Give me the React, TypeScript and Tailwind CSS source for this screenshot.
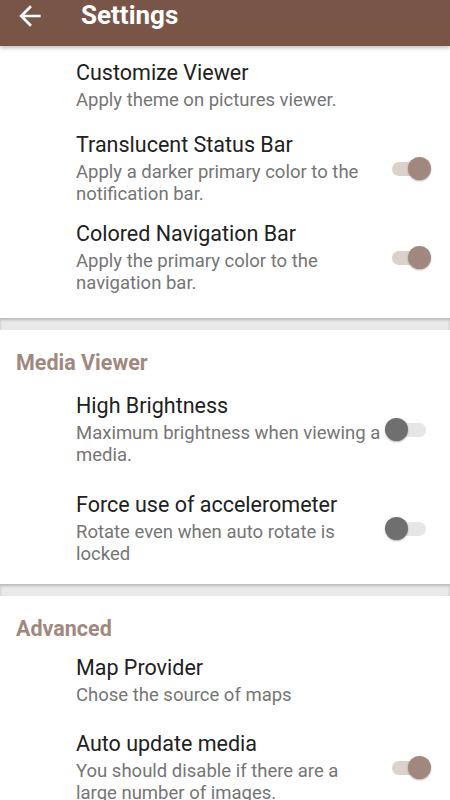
import type { ReactNode } from 'react';

type SwitchProps = { on: boolean };

function Toggle({ on }: SwitchProps) {
  return (
    <div className="relative ml-[3px] h-[23px] w-[46px] shrink-0">
      <div
        className={
          on
            ? 'absolute left-[7px] top-[4.5px] h-[14px] w-[34px] rounded-full bg-[#ddd1cc]'
            : 'absolute left-[7px] top-[4.5px] h-[14px] w-[34px] rounded-full bg-[#e6e6e6]'
        }
      />
      <div
        className={
          on
            ? 'absolute left-[23px] top-0 h-[23px] w-[23px] rounded-full bg-[#a1887f] shadow-[0_1px_2px_rgba(0,0,0,0.3)]'
            : 'absolute left-0 top-0 h-[23px] w-[23px] rounded-full bg-[#6f6f6f] shadow-[0_1px_2px_rgba(0,0,0,0.3)]'
        }
      />
    </div>
  );
}

type PrefProps = {
  title: string;
  summary: string;
  toggle?: boolean;
  className?: string;
};

function Pref({ title, summary, toggle, className }: PrefProps) {
  return (
    <div className={`flex items-center pl-[76px] ${className ?? ''}`}>
      <div className="w-[306px] shrink-0">
        <p className="text-[21.5px] leading-[26px] text-[#212121]">{title}</p>
        <p className="mt-[3px] text-[18.5px] leading-[22px] text-[#757575]">{summary}</p>
      </div>
      {toggle !== undefined && <Toggle on={toggle} />}
    </div>
  );
}

function Category({ children, className }: { children: ReactNode; className?: string }) {
  return (
    <p className={`pl-4 text-[21.5px] font-bold leading-[26px] text-[#a1887f] ${className ?? ''}`}>
      {children}
    </p>
  );
}

function Band() {
  return <div className="h-[12px] bg-[#e9e9e9] shadow-[inset_0_2px_3px_rgba(0,0,0,0.2)]" />;
}

export default function App() {
  return (
    <div className="h-[800px] w-[450px] overflow-hidden bg-white font-['Roboto',sans-serif]">
      <header className="relative z-10 h-[46px] bg-[#795548] shadow-[0_2px_4px_rgba(0,0,0,0.25)]">
        <div className="flex h-[31px] items-center">
          <svg viewBox="0 0 24 24" className="ml-[14px] h-[32px] w-[32px] fill-white">
            <path d="M20 11H7.83l5.59-5.59L12 4l-8 8 8 8 1.41-1.41L7.83 13H20v-2z" />
          </svg>
          <h1 className="ml-[35px] text-[26px] font-bold text-white">Settings</h1>
        </div>
      </header>

      <section>
        <Pref className="pt-[14px]" title="Customize Viewer" summary="Apply theme on pictures viewer." />
        <Pref
          className="pt-[21px]"
          title="Translucent Status Bar"
          summary="Apply a darker primary color to the notification bar."
          toggle
        />
        <Pref
          className="pb-[24px] pt-[16px]"
          title="Colored Navigation Bar"
          summary="Apply the primary color to the navigation bar."
          toggle
        />
      </section>
      <Band />

      <section>
        <Category className="pt-[20px]">Media Viewer</Category>
        <Pref
          className="pt-[17px]"
          title="High Brightness"
          summary="Maximum brightness when viewing a media."
          toggle={false}
        />
        <Pref
          className="pb-[19px] pt-[26px]"
          title="Force use of accelerometer"
          summary="Rotate even when auto rotate is locked"
          toggle={false}
        />
      </section>
      <Band />

      <section>
        <Category className="pt-[20px]">Advanced</Category>
        <Pref className="pt-[13px]" title="Map Provider" summary="Chose the source of maps" />
        <Pref
          className="pt-[25px]"
          title="Auto update media"
          summary="You should disable if there are a large number of images."
          toggle
        />
      </section>
    </div>
  );
}
